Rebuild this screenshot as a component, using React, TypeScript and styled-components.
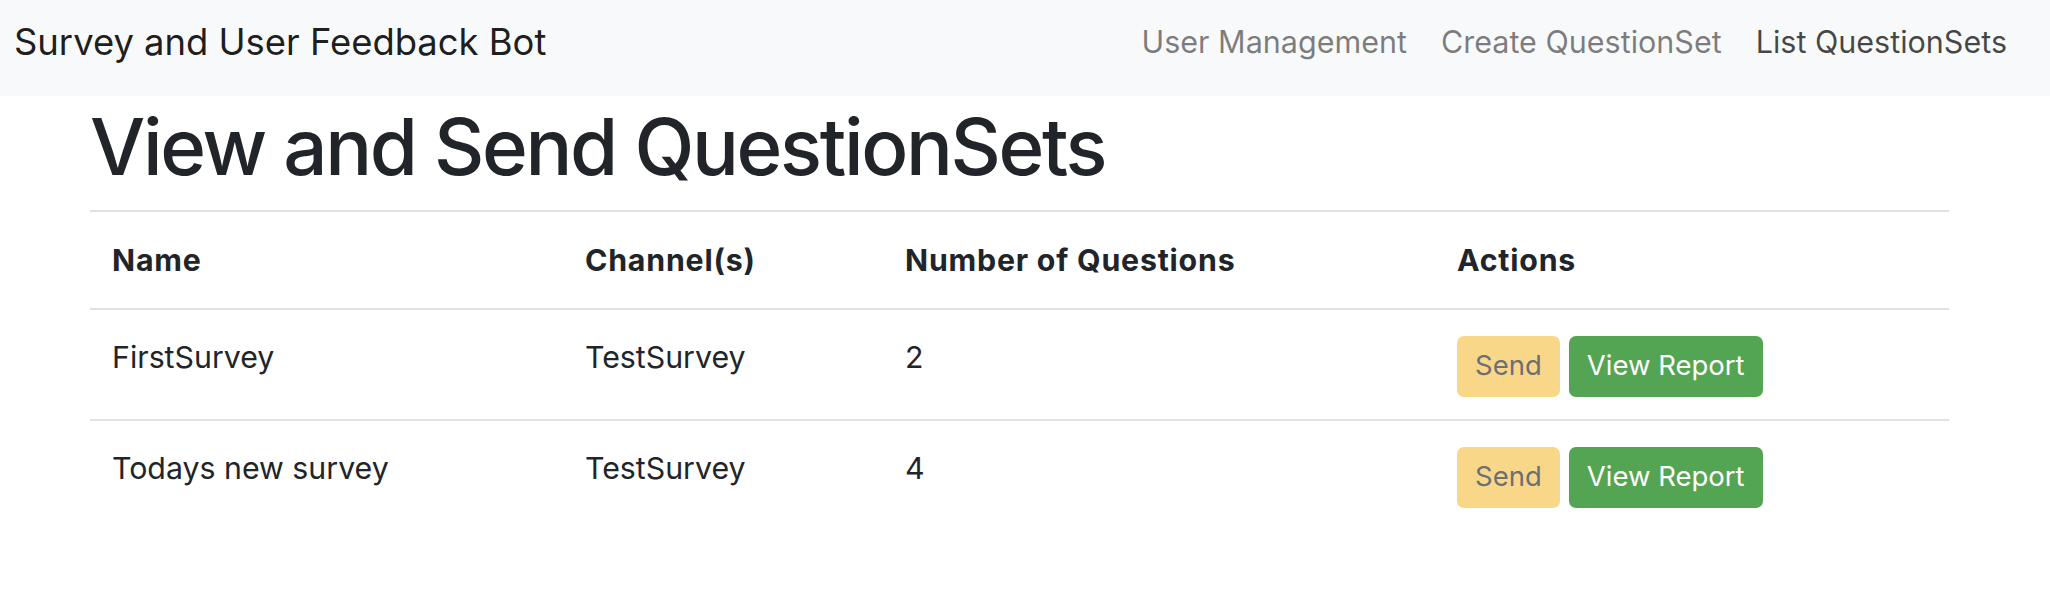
import React from "react";
import styled, { createGlobalStyle } from "styled-components";

const GlobalStyle = createGlobalStyle`
  html, body {
    margin: 0;
    padding: 0;
    background: #ffffff;
    font-family: Inter, "Noto Sans", "Liberation Sans", sans-serif;
    color: #212529;
  }
  * { box-sizing: border-box; }
`;

const Navbar = styled.nav`
  display: flex;
  align-items: center;
  justify-content: space-between;
  height: 96px;
  padding: 0 14px 12px;
  background: #f8f9fa;
`;

const Brand = styled.a`
  font-size: 36.4px;
  line-height: 1.5;
  color: rgba(0, 0, 0, 0.9);
  text-decoration: none;
  white-space: nowrap;
`;

const NavList = styled.ul`
  display: flex;
  list-style: none;
  margin: 0 12px 0 0;
  padding: 0;
`;

const NavLink = styled.a<{ $active?: boolean }>`
  display: block;
  padding: 0 17px;
  font-size: 30.5px;
  line-height: 1.5;
  color: ${(p) => (p.$active ? "rgba(0, 0, 0, 0.72)" : "rgba(0, 0, 0, 0.5)")};
  text-decoration: none;
  white-space: nowrap;
`;

const Container = styled.main`
  width: 1859px;
  margin-left: 90px;
`;

const Title = styled.h1`
  margin: 4px 0 16px;
  font-size: 78px;
  font-weight: 550;
  letter-spacing: -2.35px;
  line-height: 1.2;
  color: #212529;
`;

const Table = styled.table`
  width: 100%;
  border-collapse: collapse;
  table-layout: fixed;
  font-size: 30.3px;
  line-height: 42px;
`;

const HeadCell = styled.th`
  text-align: left;
  font-weight: 700;
  letter-spacing: 0.8px;
  padding: 27px 22px;
  border-top: 2px solid #dee2e6;
  border-bottom: 2px solid #dee2e6;
  vertical-align: middle;
`;

const Cell = styled.td`
  padding: 26px 22px 22px;
  border-top: 2px solid #dee2e6;
  vertical-align: top;
  white-space: nowrap;
`;

const BodyRow = styled.tr`
  &:first-child td { border-top: none; }
`;

const Actions = styled.div`
  display: flex;
  gap: 9px;
`;

const Button = styled.button<{ $variant: "send" | "report" }>`
  height: 61px;
  padding: 0 18px;
  border: none;
  border-radius: 7px;
  font-family: inherit;
  font-size: 27.5px;
  line-height: 1;
  cursor: pointer;
  background: ${(p) => (p.$variant === "send" ? "#f9d789" : "#53a553")};
  color: ${(p) => (p.$variant === "send" ? "#6c6f73" : "#ffffff")};
`;

const rows = [
  { name: "FirstSurvey", channel: "TestSurvey", count: 2 },
  { name: "Todays new survey", channel: "TestSurvey", count: 4 },
];

export default function App() {
  return (
    <>
      <GlobalStyle />
      <Navbar>
        <Brand href="#">Survey and User Feedback Bot</Brand>
        <NavList>
          <li><NavLink href="#">User Management</NavLink></li>
          <li><NavLink href="#">Create QuestionSet</NavLink></li>
          <li><NavLink href="#" $active>List QuestionSets</NavLink></li>
        </NavList>
      </Navbar>
      <Container>
        <Title>View and Send QuestionSets</Title>
        <Table>
          <colgroup>
            <col style={{ width: "473px" }} />
            <col style={{ width: "320px" }} />
            <col style={{ width: "552px" }} />
            <col />
          </colgroup>
          <thead>
            <tr>
              <HeadCell>Name</HeadCell>
              <HeadCell>Channel(s)</HeadCell>
              <HeadCell>Number of Questions</HeadCell>
              <HeadCell>Actions</HeadCell>
            </tr>
          </thead>
          <tbody>
            {rows.map((r) => (
              <BodyRow key={r.name}>
                <Cell>{r.name}</Cell>
                <Cell>{r.channel}</Cell>
                <Cell>{r.count}</Cell>
                <Cell>
                  <Actions>
                    <Button $variant="send" disabled>Send</Button>
                    <Button $variant="report">View Report</Button>
                  </Actions>
                </Cell>
              </BodyRow>
            ))}
          </tbody>
        </Table>
      </Container>
    </>
  );
}
